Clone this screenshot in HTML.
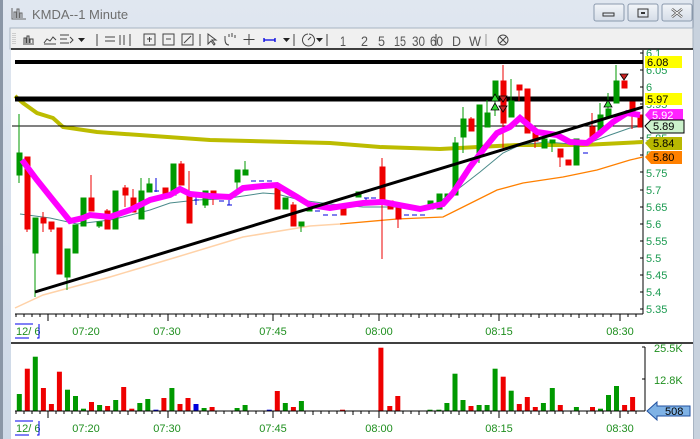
<!DOCTYPE html>
<html><head><meta charset="utf-8"><style>
html,body{margin:0;padding:0;width:700px;height:439px;overflow:hidden;background:#c9d3df;font-family:"Liberation Sans",sans-serif}
</style></head><body>
<svg width="700" height="439" viewBox="0 0 700 439" xmlns="http://www.w3.org/2000/svg" font-family="Liberation Sans, sans-serif">
<defs><linearGradient id="tb" x1="0" y1="0" x2="0" y2="1"><stop offset="0" stop-color="#e0e7f0"/><stop offset="1" stop-color="#cdd8e6"/></linearGradient>
<linearGradient id="bt" x1="0" y1="0" x2="0" y2="1"><stop offset="0" stop-color="#f2f5f9"/><stop offset="1" stop-color="#d5dde8"/></linearGradient></defs>
<rect x="0" y="0" width="700" height="439" fill="url(#tb)"/>
<rect x="0" y="0" width="3" height="439" fill="#8a96a6"/>
<rect x="693" y="0" width="7" height="439" fill="#c8d2de"/>
<line x1="693" y1="0" x2="693" y2="439" stroke="#8896a8"/>
<g stroke="#666" fill="none" stroke-width="1"><path d="M12 8v11h14M14 18v-6h2v6M17 18v-9h2v9M20 18v-5h2v5"/></g>
<text x="32" y="19" font-size="13" fill="#6e6e6e">KMDA--1 Minute</text>
<g stroke="#8a99ad" fill="url(#bt)"><rect x="594" y="4" width="30" height="17" rx="2"/><rect x="628" y="4" width="30" height="17" rx="2"/><rect x="662" y="4" width="30" height="17" rx="2"/></g>
<rect x="603" y="13" width="11" height="3" fill="none" stroke="#333"/>
<rect x="638" y="9" width="10" height="8" fill="none" stroke="#333"/><rect x="641" y="12" width="4" height="2" fill="#333"/>
<path d="M672 9l10 8M682 9l-10 8" stroke="#555" stroke-width="2.5"/><path d="M672 9l10 8M682 9l-10 8" stroke="#fff" stroke-width="1"/>
<rect x="10" y="28" width="683" height="21" fill="#f0f0f0"/>
<rect x="10" y="28" width="683" height="21" fill="none" stroke="#a8b4c2"/>
<g fill="#555" font-size="13"><path d="M13 33v12M15 33v12" stroke="#aaa" stroke-dasharray="1 1"/></g>
<g stroke="#444" fill="none" stroke-width="1">
<path d="M23 44h11M24 43v-5h2v5M27 43v-7h2v7M30 43v-4h3v4"/>
<path d="M44 43l3-4 3 2 3-4 3 3M44 44h12"/>
<path d="M60 35h9M60 39h7M60 43h9M70 37l3 3-3 3"/>
<path d="M97 34v12M105 37h10M105 41h10M120 35v10M124 35v10M130 34v12"/>
<rect x="144" y="34" width="11" height="11"/><path d="M147 39h5M149.5 37v5"/>
<rect x="163" y="34" width="11" height="11"/><path d="M166 39h5"/>
<rect x="182" y="34" width="11" height="11"/><path d="M184 43l7-7"/>
<path d="M200 34v12"/>
<path d="M208 34l0 10 3-3 3 4 1-1-3-4h4z"/>
<path d="M229 45c-3 0-4-3-4-6v-3M229 37v-3M232 37v-4M235 38v-3M225 38v2"/>
<path d="M249 34v11M243.5 39.5h11"/>
<path d="M294 34v12M308 34a6 6 0 1 0 1 0M311 37l-3 3"/>
<path d="M327 34v12M436 34v12"/>
<circle cx="503" cy="40" r="5"/><path d="M500 37l6 6M506 37l-6 6"/>
</g>
<path d="M264 40h11M264 38v4M275 38v4" stroke="#0000e0" stroke-width="1.3"/>
<g fill="#222"><path d="M78 38h7l-3.5 4z"/><path d="M283 38h7l-3.5 4z"/><path d="M316 38h7l-3.5 4z"/></g>
<g font-size="14" fill="#555" font-family="Liberation Sans Narrow, Liberation Sans, sans-serif"><text x="340" y="46" textLength="6" lengthAdjust="spacingAndGlyphs">1</text><text x="361" y="46" textLength="7" lengthAdjust="spacingAndGlyphs">2</text><text x="378" y="46" textLength="7" lengthAdjust="spacingAndGlyphs">5</text><text x="394" y="46" textLength="12" lengthAdjust="spacingAndGlyphs">15</text><text x="412" y="46" textLength="13" lengthAdjust="spacingAndGlyphs">30</text><text x="430" y="46" textLength="13" lengthAdjust="spacingAndGlyphs">60</text><text x="452" y="46" textLength="9" lengthAdjust="spacingAndGlyphs">D</text><text x="469" y="46" textLength="12" lengthAdjust="spacingAndGlyphs">W</text></g>
<line x1="486" y1="34" x2="486" y2="46" stroke="#999"/>
<rect x="11" y="49" width="682" height="390" fill="#fff"/>
<line x1="11" y1="49" x2="693" y2="49" stroke="#000" stroke-width="1.5"/>
<line x1="11" y1="343" x2="693" y2="343" stroke="#000" stroke-width="1.5"/>
<line x1="643" y1="50" x2="643" y2="314" stroke="#000"/>
<g font-size="11" fill="#1a9a50">
<text x="646" y="57">6.1</text><text x="646" y="74">6.05</text><text x="646" y="91">6</text><text x="646" y="108">5.95</text>
<text x="646" y="142">5.85</text><text x="646" y="159">5.8</text><text x="646" y="177">5.75</text><text x="646" y="194">5.7</text><text x="646" y="211">5.65</text><text x="646" y="228">5.6</text><text x="646" y="245">5.55</text><text x="646" y="262">5.5</text><text x="646" y="279">5.45</text><text x="646" y="296">5.4</text><text x="646" y="313">5.35</text></g>
<g stroke="#000"><path d="M640 53h3M640 70h3M640 87h3M640 104h3M640 121h3M640 138h3M640 155h3M640 172h3M640 190h3M640 207h3M640 224h3M640 241h3M640 258h3M640 275h3M640 292h3M640 309h3"/></g>
<path d="M15 308 L43 295 L110 277 L177 257 L243 237 L310 226 L340 224" fill="none" stroke="#ffd2a8" stroke-width="1.5"/>
<path d="M340 224 L397 219 L443 217 L463 207 L497 190 L523 183 L563 177 L597 170 L630 160 L643 157" fill="none" stroke="#ff8000" stroke-width="1.3"/>
<path d="M15 96 L23 103 L37 113 L53 118 L63 127 L97 132 L210 140 L330 143 L380 147 L440 149 L517 145 L583 145 L643 142" fill="none" stroke="#bcbc00" stroke-width="4"/>
<path d="M20 214 L50 218 L77 224 L110 220 L123 217 L150 210 L170 203 L197 200 L223 199 L263 193 L277 194 L300 200 L330 204 L363 207 L430 207 L453 193 L480 172 L503 153 L520 145 L547 142 L583 145 L610 135 L630 128 L643 126" fill="none" stroke="#4a8a8a" stroke-width="1"/>
<path d="M15 62H643" stroke="#000" stroke-width="4"/>
<path d="M15 99H643" stroke="#000" stroke-width="5"/>
<path d="M12 126H643" stroke="#000" stroke-width="1"/>
<g stroke="#009900" fill="#009900">
<path d="M19 114V183M35 218V297M67 249V290M99 222V228M141 178V219M149 178V192M205 191V208M237 170V191M245 161V175M301 222V232M455 137V195M463 107V153M479 105V163M487 100V127M495 81V116M511 79V117M544 133V148M552 140V152M600 103V131M608 93V117M616 65V103" fill="none"/>
<rect x="17" y="153" width="5" height="22"/><rect x="33" y="218" width="5" height="35"/><rect x="65" y="249" width="5" height="28"/><rect x="73" y="225" width="5" height="28"/><rect x="81" y="198" width="5" height="28"/><rect x="97" y="222" width="5" height="4"/><rect x="113" y="191" width="5" height="38"/><rect x="139" y="191" width="5" height="28"/><rect x="147" y="184" width="5" height="8"/><rect x="171" y="164" width="5" height="31"/><rect x="203" y="191" width="5" height="14"/><rect x="235" y="170" width="5" height="12"/><rect x="243" y="170" width="5" height="5"/><rect x="283" y="198" width="5" height="11"/><rect x="299" y="222" width="5" height="4"/><rect x="307" y="209" width="5" height="2"/><rect x="356" y="192" width="5" height="5"/><rect x="428" y="201" width="5" height="8"/><rect x="437" y="194" width="5" height="15"/><rect x="445" y="194" width="5" height="5"/><rect x="453" y="143" width="5" height="52"/><rect x="461" y="119" width="5" height="18"/><rect x="477" y="105" width="5" height="50"/><rect x="485" y="113" width="5" height="14"/><rect x="493" y="81" width="5" height="18"/><rect x="509" y="101" width="5" height="16"/><rect x="542" y="139" width="5" height="9"/><rect x="550" y="140" width="5" height="3"/><rect x="574" y="139" width="5" height="26"/><rect x="598" y="115" width="5" height="16"/><rect x="606" y="109" width="5" height="8"/><rect x="614" y="81" width="5" height="22"/>
</g>
<g stroke="#ee0000" fill="#ee0000">
<path d="M27 157V232M43 212V232M51 222V232M91 175V211M107 209V229M125 185V207M133 189V212M181 161V185M189 171V223M213 191V205M293 202V226M382 158V259M398 207V228M471 117V131M503 65V148M519 85V101M535 133V148M560 149V167M592 113V137M632 102V129" fill="none"/>
<rect x="25" y="157" width="5" height="72"/><rect x="41" y="218" width="5" height="5"/><rect x="49" y="222" width="5" height="7"/><rect x="57" y="228" width="5" height="46"/><rect x="89" y="198" width="5" height="13"/><rect x="105" y="211" width="5" height="18"/><rect x="123" y="188" width="5" height="7"/><rect x="131" y="198" width="5" height="14"/><rect x="163" y="188" width="5" height="7"/><rect x="179" y="164" width="5" height="21"/><rect x="187" y="194" width="5" height="29"/><rect x="211" y="191" width="5" height="4"/><rect x="275" y="184" width="5" height="25"/><rect x="291" y="205" width="5" height="21"/><rect x="341" y="208" width="5" height="7"/><rect x="380" y="167" width="5" height="32"/><rect x="388" y="201" width="5" height="8"/><rect x="396" y="207" width="5" height="12"/><rect x="469" y="119" width="5" height="12"/><rect x="501" y="81" width="5" height="42"/><rect x="517" y="85" width="5" height="5"/><rect x="525" y="89" width="5" height="44"/><rect x="533" y="133" width="5" height="8"/><rect x="558" y="149" width="5" height="8"/><rect x="566" y="160" width="5" height="5"/><rect x="590" y="127" width="5" height="10"/><rect x="622" y="81" width="5" height="7"/><rect x="630" y="102" width="5" height="13"/><rect x="638" y="115" width="4" height="12"/>
</g>
<g stroke="#0000dd" stroke-width="1" fill="none">
<path d="M154 191h5M156 178v14M194 200h5M196 197v8M219 201h5M227 205h5M229 200v5M251 181h5M259 181h5M267 181h5M315 211h5M323 215h5M332 215h5M348 207h5M364 198h5M366 198v3M371 198h5M404 215h5M412 215h5M420 215h5M583 153h5"/>
</g>
<path d="M22 160 L37 180 L53 200 L70 221 L83 218 L90 215 L110 217 L130 210 L150 200 L170 195 L180 189 L190 194 L210 196 L230 197 L243 188 L263 186 L277 185 L297 197 L310 205 L330 208 L363 203 L383 202 L420 209 L443 204 L453 193 L470 167 L483 150 L497 133 L510 127 L520 118 L537 132 L557 135 L570 142 L587 143 L600 133 L613 122 L627 113 L640 115" fill="none" stroke="#ff00ff" stroke-width="6"/>
<path d="M35 292 L643 107" stroke="#000" stroke-width="3"/>
<g stroke="#000" stroke-width="0.8"><path d="M495 94l-4 7h8z" fill="#33dd33"/><path d="M495 103l-4 7h8z" fill="#33dd33"/><path d="M499 96h8l-4 6z" fill="#cc2222"/><path d="M499 106h8l-4 6z" fill="#cc2222"/><path d="M608 100l-4 7h8z" fill="#33dd33"/><path d="M620 74h8l-4 6z" fill="#cc2222"/></g>
<rect x="645" y="56" width="37" height="12" fill="#ffff00"/><text x="647" y="66" font-size="11" fill="#000">6.08</text>
<rect x="645" y="93" width="37" height="12" fill="#ffff00"/><text x="647" y="103" font-size="11" fill="#000">5.97</text>
<path d="M645 115l5-6h33v12h-33z" fill="#ff22ff"/><text x="652" y="119" font-size="11" fill="#fff">5.92</text>
<path d="M645 126l6-6h33v13h-33z" fill="#ccf2cc" stroke="#000"/><text x="653" y="130" font-size="11" fill="#000">5.89</text>
<path d="M645 143l6-6h31v13h-31z" fill="#b8b800"/><text x="653" y="147" font-size="11" fill="#000">5.84</text>
<path d="M645 157l6-6h31v13h-31z" fill="#ff8000"/><text x="653" y="161" font-size="11" fill="#000">5.80</text>
<line x1="15" y1="314" x2="643" y2="314" stroke="#000"/>
<path stroke="#000" d="M16 314v3M24 314v3M32 314v3M40 314v3M56 314v3M64 314v3M72 314v3M80 314v3M88 314v4M96 314v3M104 314v3M112 314v3M120 314v3M128 314v4M136 314v3M144 314v3M152 314v3M160 314v3M176 314v3M184 314v3M192 314v3M200 314v3M208 314v4M216 314v3M224 314v3M232 314v3M240 314v3M248 314v4M256 314v3M264 314v3M281 314v3M289 314v3M297 314v3M305 314v3M313 314v4M321 314v3M329 314v3M337 314v3M345 314v3M353 314v4M361 314v3M369 314v3M387 314v3M395 314v3M403 314v3M411 314v3M419 314v4M427 314v3M435 314v3M443 314v3M451 314v3M459 314v4M467 314v3M475 314v3M483 314v3M491 314v3M507 314v3M515 314v3M523 314v3M531 314v3M539 314v4M547 314v3M555 314v3M563 314v3M571 314v3M579 314v4M587 314v3M595 314v3M603 314v3M611 314v3M628 314v3M636 314v3M48 314v7M168 314v7M273 314v7M379 314v7M499 314v7M620 314v7"/>
<g font-size="11" fill="#1f8f1f" text-anchor="middle"><text x="86" y="335">07:20</text><text x="167" y="335">07:30</text><text x="273" y="335">07:45</text><text x="379" y="335">08:00</text><text x="499" y="335">08:15</text><text x="620" y="335">08:30</text></g>
<text x="16" y="335" font-size="11" fill="#1f8f1f">12/ 6</text>
<path d="M15 324h18M15 338h14M39 324v14h-2" stroke="#0000ee" fill="none"/>
<line x1="645" y1="347" x2="645" y2="411" stroke="#000"/>
<path d="M642 347h3M642 379h3" stroke="#000"/>
<text x="654" y="352" font-size="11" fill="#1f8f1f">25.5K</text><text x="654" y="384" font-size="11" fill="#1f8f1f">12.8K</text>
<g fill="#009900"><rect x="16.8" y="394" width="5" height="16.7"/><rect x="32.8" y="356.7" width="5" height="54"/><rect x="65" y="389.7" width="5" height="21"/><rect x="73" y="396" width="5" height="14.7"/><rect x="81" y="408.7" width="5" height="2"/><rect x="97.1" y="405" width="5" height="5.7"/><rect x="113.2" y="400" width="5" height="10.7"/><rect x="137.3" y="403" width="5" height="7.7"/><rect x="145.3" y="399" width="5" height="11.7"/><rect x="169.4" y="388" width="5" height="22.7"/><rect x="201.6" y="408" width="5" height="2.7"/><rect x="234.6" y="408" width="5" height="2.7"/><rect x="242.6" y="405" width="5" height="5.7"/><rect x="282.8" y="403" width="5" height="7.7"/><rect x="298.9" y="401" width="5" height="9.7"/><rect x="427.5" y="409.7" width="5" height="1"/><rect x="436.4" y="409.7" width="5" height="1"/><rect x="444.4" y="403" width="5" height="7.7"/><rect x="452.5" y="373.7" width="5" height="37"/><rect x="460.5" y="400" width="5" height="10.7"/><rect x="476.6" y="405" width="5" height="5.7"/><rect x="484.6" y="405" width="5" height="5.7"/><rect x="492.6" y="368.7" width="5" height="42"/><rect x="508.7" y="390.7" width="5" height="20"/><rect x="540.9" y="403" width="5" height="7.7"/><rect x="549.8" y="388" width="5" height="22.7"/><rect x="573.9" y="407" width="5" height="3.7"/><rect x="598" y="408.7" width="5" height="2"/><rect x="606" y="395" width="5" height="15.7"/><rect x="614" y="386" width="5" height="24.7"/></g>
<g fill="#ee0000"><rect x="24.8" y="368.7" width="5" height="42"/><rect x="40.9" y="388" width="5" height="22.7"/><rect x="48.9" y="404" width="5" height="6.7"/><rect x="56.9" y="371.7" width="5" height="39"/><rect x="89" y="402" width="5" height="8.7"/><rect x="105.1" y="406" width="5" height="4.7"/><rect x="121.2" y="387" width="5" height="23.7"/><rect x="129.3" y="408.7" width="5" height="2"/><rect x="161.4" y="398" width="5" height="12.7"/><rect x="177.5" y="404" width="5" height="6.7"/><rect x="185.5" y="398" width="5" height="12.7"/><rect x="209.6" y="407" width="5" height="3.7"/><rect x="274.8" y="391" width="5" height="19.7"/><rect x="290.9" y="407" width="5" height="3.7"/><rect x="340" y="409.7" width="5" height="1"/><rect x="378.4" y="347.7" width="5" height="63"/><rect x="387.3" y="406" width="5" height="4.7"/><rect x="395.3" y="396" width="5" height="14.7"/><rect x="468.5" y="406" width="5" height="4.7"/><rect x="500.7" y="376.7" width="5" height="34"/><rect x="516.8" y="404" width="5" height="6.7"/><rect x="524.8" y="397" width="5" height="13.7"/><rect x="532.8" y="407" width="5" height="3.7"/><rect x="557.8" y="405" width="5" height="5.7"/><rect x="590" y="407" width="5" height="3.7"/><rect x="622.1" y="405" width="5" height="5.7"/><rect x="630.1" y="397" width="5" height="13.7"/></g>
<g fill="#0000dd"><rect x="153.4" y="409.7" width="5" height="1"/><rect x="193.5" y="404" width="5" height="6.7"/><rect x="266.8" y="409.7" width="5" height="1"/></g>
<line x1="15" y1="411" x2="645" y2="411" stroke="#000"/>
<path stroke="#000" d="M16 411v3M24 411v3M32 411v3M40 411v3M56 411v3M64 411v3M72 411v3M80 411v3M88 411v4M96 411v3M104 411v3M112 411v3M120 411v3M128 411v4M136 411v3M144 411v3M152 411v3M160 411v3M176 411v3M184 411v3M192 411v3M200 411v3M208 411v4M216 411v3M224 411v3M232 411v3M240 411v3M248 411v4M256 411v3M264 411v3M281 411v3M289 411v3M297 411v3M305 411v3M313 411v4M321 411v3M329 411v3M337 411v3M345 411v3M353 411v4M361 411v3M369 411v3M387 411v3M395 411v3M403 411v3M411 411v3M419 411v4M427 411v3M435 411v3M443 411v3M451 411v3M459 411v4M467 411v3M475 411v3M483 411v3M491 411v3M507 411v3M515 411v3M523 411v3M531 411v3M539 411v4M547 411v3M555 411v3M563 411v3M571 411v3M579 411v4M587 411v3M595 411v3M603 411v3M611 411v3M628 411v3M636 411v3M48 411v7M168 411v7M273 411v7M379 411v7M499 411v7M620 411v7"/>
<path d="M647 411l10-9v4h33v10h-33v4z" fill="#7fb2e5" stroke="#2050a0"/><text x="665" y="415" font-size="11" fill="#000">508</text>
<g font-size="11" fill="#1f8f1f" text-anchor="middle"><text x="86" y="432">07:20</text><text x="167" y="432">07:30</text><text x="273" y="432">07:45</text><text x="379" y="432">08:00</text><text x="499" y="432">08:15</text><text x="620" y="432">08:30</text></g>
<text x="16" y="432" font-size="11" fill="#1f8f1f">12/ 6</text>
<path d="M15 421h18M15 435h14M39 421v14h-2" stroke="#0000ee" fill="none"/>
</svg>
</body></html>
